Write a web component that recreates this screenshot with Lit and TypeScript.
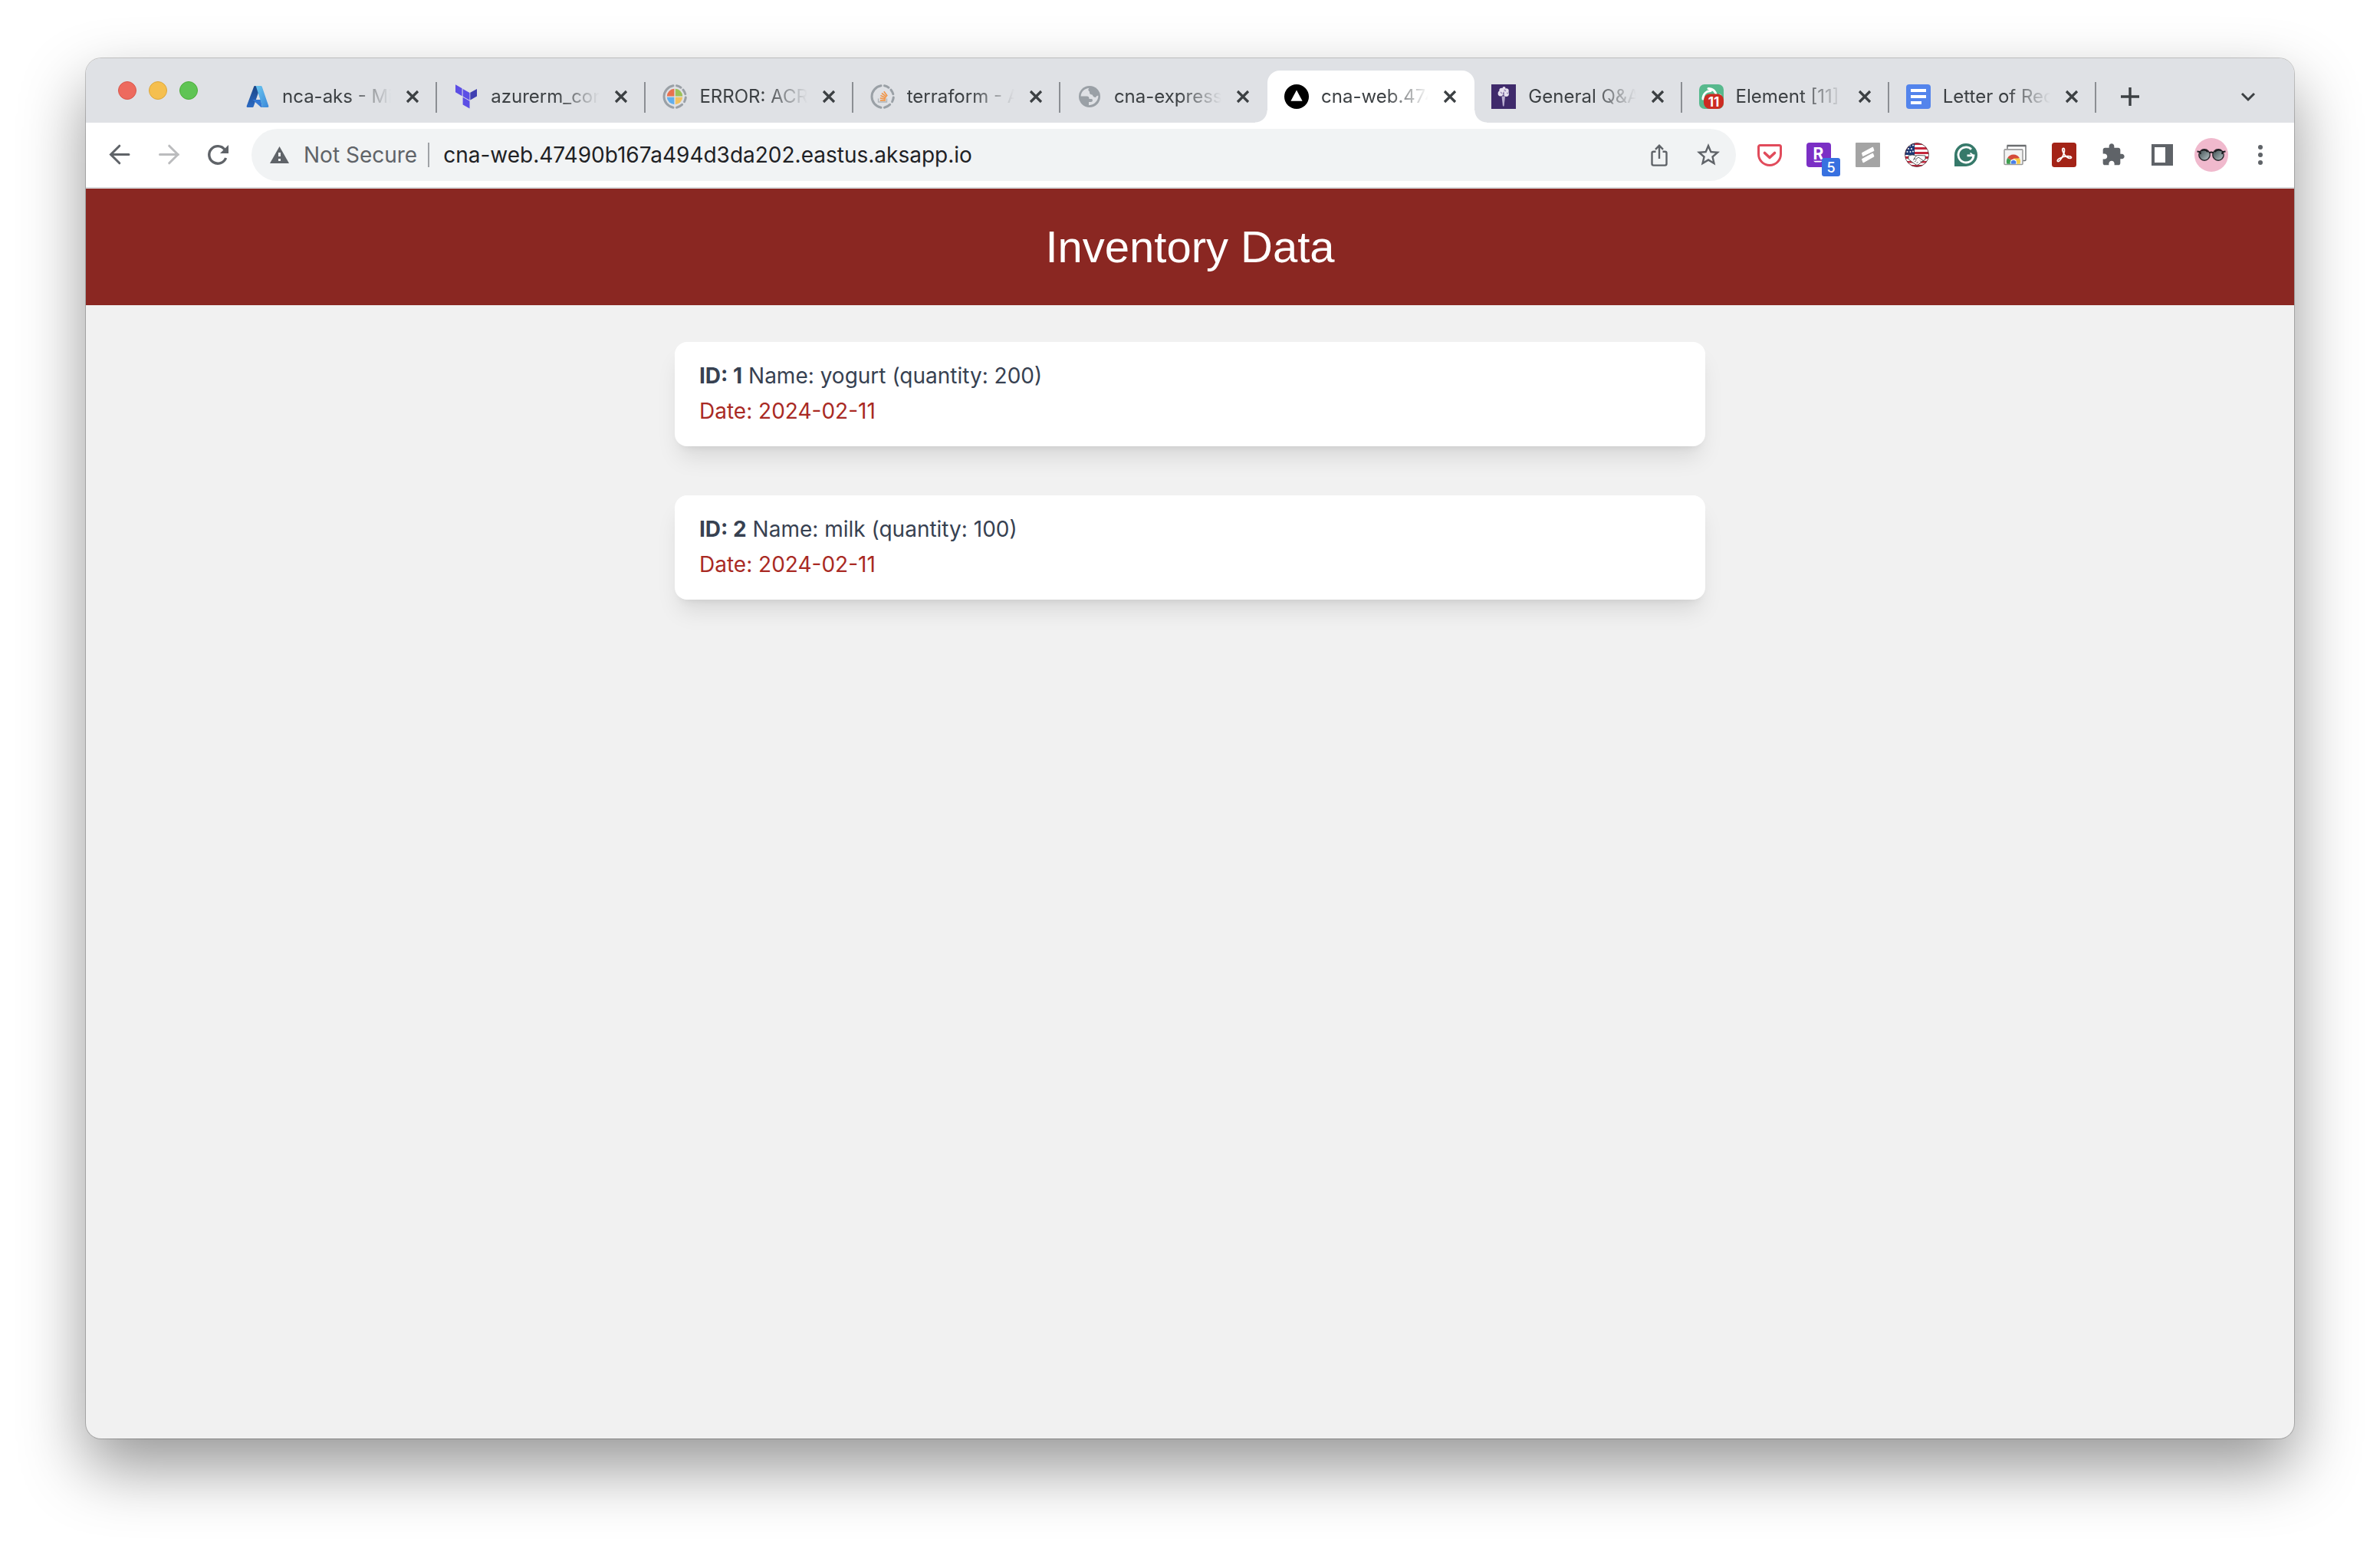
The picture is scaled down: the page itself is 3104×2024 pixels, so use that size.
import { LitElement, html, css, svg, nothing } from "lit";
import { customElement, property } from "lit/decorators.js";
import { classMap } from "lit/directives/class-map.js";

const brokenRing = svg`
  <path d="M14 1.8A14.4 14.4 0 0 0 14 30.2" fill="none" stroke="#9aa0a6" stroke-width="3" stroke-linecap="round"/>
  <path d="M18.5 1.8A14.4 14.4 0 0 1 24 4.2M27 7.2A14.4 14.4 0 0 1 29.8 12.6M30.3 17A14.4 14.4 0 0 1 28.6 22.6M25.6 26.4A14.4 14.4 0 0 1 18.5 30.2"
    fill="none" stroke="#9aa0a6" stroke-width="3" stroke-linecap="round"/>`;

const icons: Record<string, unknown> = {
  azure: html`<svg class="i32" viewBox="0 0 32 32" aria-hidden="true">
    <defs>
      <linearGradient id="az1" x1="0" y1="0" x2="0" y2="1"><stop offset="0" stop-color="#1c4585"/><stop offset="1" stop-color="#2c6bc4"/></linearGradient>
      <linearGradient id="az2" x1="0" y1="0" x2="1" y2="1"><stop offset="0" stop-color="#6bc9f2"/><stop offset="1" stop-color="#3b88d8"/></linearGradient>
    </defs>
    <path d="M12.6 2H20l-9.3 27a1.5 1.5 0 0 1-1.4 1H3a1.3 1.3 0 0 1-1.3-1.8l9.3-25A1.6 1.6 0 0 1 12.6 2z" fill="url(#az1)"/>
    <path d="M9.4 20H20l2 9.4-1.5.6z" fill="#3378d3"/>
    <path d="M12.6 2h7.6A1.7 1.7 0 0 1 21.7 3l8.6 25.2A1.4 1.4 0 0 1 29 30h-8a1.4 1.4 0 0 0 1-1.8L14 3a1.6 1.6 0 0 0-1.4-1z" fill="url(#az2)"/>
  </svg>`,
  terraform: html`<svg class="i32" viewBox="0 0 32 32" aria-hidden="true">
    <path d="M2 .3l8.6 5v10L2 10.3zM11.6 6l8.9 5v9.8l-8.9-5zM11.6 16.8l8.9 5v9.6l-8.9-5z" fill="#5c4ee5"/>
    <path d="M21.3 10.8L30 6v9.4l-8.7 5z" fill="#4040b2"/>
  </svg>`,
  azureDevops: html`<svg class="i32" viewBox="0 0 32 32" aria-hidden="true">${brokenRing}
    <path d="M15.4 15.4V5.8a10 10 0 0 0-9.6 9.6z" fill="#e8714f"/>
    <path d="M16.8 15.4V5.8a10 10 0 0 1 9.4 9.6z" fill="#9cc158"/>
    <path d="M15.4 16.8v9.4a10 10 0 0 1-9.6-9.4z" fill="#62aeec"/>
    <path d="M16.8 16.8v9.4a10 10 0 0 0 9.4-9.4z" fill="#f2c15f"/>
  </svg>`,
  stack: html`<svg class="i32" viewBox="0 0 32 32" aria-hidden="true">${brokenRing}
    <path d="M10.5 18.5v4.5h11v-4.500" fill="none" stroke="#b0b4b8" stroke-width="1.300"/>
    <path d="M12.800 20.800h7.200M12.800 17.800l7.200 1.400M13.400 14.600l7 3.200M15 11.500l6.200 4.800M17.800 9.200l4.400 6" fill="none" stroke="#f0964a" stroke-width="1.700"/>
  </svg>`,
  globe: html`<svg class="i32" viewBox="0 0 32 32" aria-hidden="true">
    <circle cx="16" cy="16" r="14" fill="#9aa0a6"/>
    <path d="M4.600 15.500C5 10 9 5.500 15.500 4.800C13.800 6.500 14 8.500 16 9.500C15.500 12 17 13.500 19.500 13.500C20.500 16 22 17 24 17C25 15.500 26 14.500 27.400 15C27.400 21 23 26.500 15 27.300V23H18C20.300 23 20.800 19.300 18.500 19H15.500C15.500 16.500 14.500 15.500 12.500 15.500Z" fill="#dfe1e5"/>
  </svg>`,
  vercel: html`<svg class="i32" viewBox="0 0 32 32" aria-hidden="true">
    <circle cx="16" cy="16" r="16" fill="#000"/><path d="M16 7.600l7.600 14.200H8.400z" fill="#fff"/>
  </svg>`,
  torch: html`<svg class="i32" viewBox="0 0 32 32" aria-hidden="true">
    <path d="M0 0h32v32H0z" fill="#3f2a6b"/>
    <path d="M13.500 15.500h4.500l-1.500 13h-1.500z" fill="#b9aed0"/>
    <g fill="#e6e0ef"><circle cx="12" cy="12" r="3.400"/><circle cx="19.500" cy="12.500" r="3.400"/><circle cx="13.500" cy="8" r="3.200"/><circle cx="19.500" cy="8.500" r="3.200"/><circle cx="16.500" cy="5" r="2"/></g>
    <path d="M12 10l2 2M17 7l2 2M17 12l-2 2M20 11l2 1" stroke="#8f7eb0" stroke-width="1.200"/>
  </svg>`,
  element: html`<svg class="i32" viewBox="0 0 32 32" aria-hidden="true">
    <rect width="32" height="32" rx="7" fill="#57b98d"/>
    <path d="M12 5.500c6 0 10 4 10.300 9M5 19c0-6 4-10 10-10.500M27 14c1 .5 1 1 1 2" fill="none" stroke="#fff" stroke-width="3" stroke-linecap="round"/>
    <rect x="6" y="12.500" width="26" height="19.500" rx="8" fill="#cc2b22"/>
    <text x="19" y="28.500" text-anchor="middle" font-family="Inter, sans-serif" font-size="17" font-weight="700" fill="#fff">11</text>
  </svg>`,
  docs: html`<svg class="i32" viewBox="0 0 32 32" aria-hidden="true">
    <rect width="32" height="32" rx="4" fill="#5384ec"/>
    <path d="M6 6h20v4H6zM6 14h20v4H6zM6 22h14v4H6z" fill="#fff"/>
  </svg>`,
  close: html`<svg class="i32" viewBox="0 0 32 32" aria-hidden="true">
    <path d="M9 9l14 14M23 9L9 23" stroke="#3c4043" stroke-width="3.200"/>
  </svg>`,
  plus: html`<svg class="i32" viewBox="0 0 32 32" aria-hidden="true">
    <path d="M16 4v24M4 16h24" stroke="#3c4043" stroke-width="3.400"/>
  </svg>`,
  chevron: html`<svg class="i32" viewBox="0 0 32 32" aria-hidden="true">
    <path d="M8 12l8 8 8-8" fill="none" stroke="#3c4043" stroke-width="3"/>
  </svg>`,
  back: html`<svg class="i32" viewBox="0 0 32 32" aria-hidden="true">
    <path d="M28 15.500H4.500M15.800 4.200L4.500 15.500l11.300 11.300" fill="none" stroke="#5f6368" stroke-width="3" stroke-linecap="round"/>
  </svg>`,
  forward: html`<svg class="i32" viewBox="0 0 32 32" aria-hidden="true">
    <path d="M4.500 15.500h24M16.700 4.200L28 15.500 16.700 26.800" fill="none" stroke="#bbbcbe" stroke-width="3" stroke-linecap="round"/>
  </svg>`,
  reload: html`<svg class="i32" viewBox="0 0 32 32" aria-hidden="true">
    <path d="M25 9A11.300 11.300 0 1 0 26.600 20" fill="none" stroke="#5f6368" stroke-width="3.400"/>
    <path d="M30 3v11H19z" fill="#5f6368"/>
  </svg>`,
  warning: html`<svg class="i26" viewBox="0 0 26 26" aria-hidden="true">
    <path d="M12.500 2L25 24H0z" fill="#5f6368"/><path d="M11 10h3v5h-3zM11 18h3v3h-3z" fill="#f1f3f4"/>
  </svg>`,
  share: html`<svg class="i32" viewBox="0 0 32 32" aria-hidden="true">
    <path d="M11.500 11.700H8.500a2 2 0 0 0-2 2V27.600a2 2 0 0 0 2 2h15a2 2 0 0 0 2-2V13.700a2 2 0 0 0-2-2h-3M16 21V5M11 8.800L16 3.800l5 5" fill="none" stroke="#5f6368" stroke-width="2.400"/>
  </svg>`,
  star: html`<svg class="i36" viewBox="0 0 24 24" aria-hidden="true">
    <path d="M22 9.240l-7.190-.62L12 2 9.190 8.630 2 9.240l5.460 4.730L5.820 21 12 17.270 18.180 21l-1.630-7.030L22 9.240zM12 15.400l-3.760 2.270 1-4.280-3.320-2.880 4.380-.38L12 6.100l1.710 4.040 4.380.38-3.320 2.880 1 4.280L12 15.400z" fill="#5f6368"/>
  </svg>`,
  pocket: html`<svg class="i32" viewBox="0 0 32 32" aria-hidden="true">
    <path d="M3.500 3.500h25a2 2 0 0 1 2 2V15a14.500 14.500 0 0 1-29 0V5.500a2 2 0 0 1 2-2z" fill="none" stroke="#e14b5b" stroke-width="3"/>
    <path d="M9.500 13.500l6.500 6 6.500-6" fill="none" stroke="#e14b5b" stroke-width="3.600" stroke-linecap="round" stroke-linejoin="round"/>
  </svg>`,
  rakuten: html`<svg class="i32" viewBox="0 0 32 32" aria-hidden="true">
    <rect width="32" height="32" rx="4" fill="#7b2fc5"/>
    <text x="15.500" y="21.500" text-anchor="middle" font-family="Inter, sans-serif" font-size="21" font-weight="700" fill="#fff">R</text>
    <path d="M9 23.800h12l-2.500 1.800H11z" fill="#fff"/>
  </svg>`,
  scribe: html`<svg class="i32" viewBox="0 0 32 32" aria-hidden="true">
    <rect width="32" height="32" rx="1" fill="#a4a4a4"/>
    <path d="M8.500 13.500L22.500 6 24 10.500 9.500 17.500zM8.500 21.500l14-7.500 1.500 4L10 26z" fill="#fff" stroke="#fff" stroke-linejoin="round"/>
  </svg>`,
  flag: html`<svg class="i32" viewBox="0 0 32 32" aria-hidden="true">
    <defs><clipPath id="fl"><circle cx="16" cy="16" r="15.500"/></clipPath></defs>
    <g clip-path="url(#fl)">
      <path d="M0 0h32v32H0z" fill="#fff"/>
      <path d="M0 0h32v3H0zM0 6h32v3H0zM0 12h32v3H0zM0 18h32v3H0zM0 24h32v2.500H0zM0 29h32v3H0z" fill="#c4273c"/>
      <path d="M0 0h13v16H0z" fill="#1f3a75"/>
      <g fill="#fff"><circle cx="7" cy="4" r="1"/><circle cx="11" cy="3.500" r="1"/><circle cx="5" cy="8" r="1"/><circle cx="9" cy="8" r="1"/><circle cx="3.500" cy="12" r="1"/><circle cx="7.500" cy="12" r="1"/><circle cx="11" cy="11.500" r="1"/></g>
      <path d="M5 17l5-1 5 1 3-.5 9 .5v5l-5 3-3 3-3 1.500-6-4-5-4z" fill="#fff" stroke="#333" stroke-width=".8"/>
      <path d="M15.500 17l-3.500 4 3 .5 3-2.500 7 5M11 23l2-2M13 25l2.500-2M15.500 27l2-2M20 23.500l2 2" fill="none" stroke="#333" stroke-width=".8"/>
    </g>
    <circle cx="16" cy="16" r="15.500" fill="none" stroke="#4a2a32" stroke-width=".8"/>
  </svg>`,
  grammarly: html`<svg class="i32" viewBox="0 0 32 32" aria-hidden="true">
    <path d="M1 31V16A15 15 0 1 1 16 31z" fill="#36796a"/>
    <path d="M23 8.800A10 10 0 1 0 26 16.800H17.500" fill="none" stroke="#fff" stroke-width="2.800"/>
    <path d="M21.500 13.500l4.500 3.500-2 5" fill="none" stroke="#fff" stroke-width="1.600"/>
  </svg>`,
  remote: html`<svg class="i32" viewBox="0 0 32 32" aria-hidden="true">
    <rect x="6" y="4" width="24" height="19.500" rx="1" fill="#fff" stroke="#6b6e70" stroke-width="1.400"/><path d="M5.500 4h25" stroke="#6b6e70" stroke-width="2.400"/>
    <rect x="2" y="9" width="24" height="19.500" rx="1" fill="#f3f3f3" stroke="#9a9a9a" stroke-width="1.500"/><path d="M2 9h24" stroke="#a5a5a5" stroke-width="2.200"/>
    <path d="M14 24.500L6.200 20A9 9 0 0 1 21.800 20z" fill="#d44a3a"/>
    <path d="M6.200 20A9 9 0 0 0 5.400 27.700H14V24.500z" fill="#3f9e50"/>
    <path d="M14 20.500h8.100a9 9 0 0 1 .5 7.200H14z" fill="#f5cb45"/>
    <path d="M10.200 27.700a4.300 4.300 0 1 1 7.600 0z" fill="#fff"/><path d="M11 27.700a3.400 3.400 0 1 1 6 0z" fill="#4a80e8"/>
  </svg>`,
  acrobat: html`<svg class="i32" viewBox="0 0 32 32" aria-hidden="true">
    <rect width="32" height="32" rx="3.500" fill="#a32317"/>
    <path d="M14.500 7.500c2.500-1 2.200 3.500 1.200 6.500-1.200 4-4.500 9.500-7 10.500-2 .5-2-2 1-3.800 3.500-2 9-3.300 12.500-3 3.500.2 4.200 2.300 2.200 2.700-3 .5-7.500-3.500-9.200-6.800-1.200-2.500-1.700-5.500-.7-6.100z" fill="none" stroke="#fff" stroke-width="1.800"/>
  </svg>`,
  puzzle: html`<svg class="i32" viewBox="0 0 24 24" aria-hidden="true">
    <path d="M20.500 11H19V7c0-1.100-.9-2-2-2h-4V3.500C13 2.120 11.880 1 10.500 1S8 2.120 8 3.500V5H4c-1.100 0-1.990.9-1.990 2v3.800H3.500c1.490 0 2.700 1.210 2.700 2.700s-1.210 2.700-2.700 2.700H2V20c0 1.100.9 2 2 2h3.800v-1.500c0-1.490 1.210-2.700 2.700-2.700 1.490 0 2.700 1.210 2.700 2.700V22H17c1.100 0 2-.9 2-2v-4h1.500c1.380 0 2.500-1.120 2.500-2.500S21.880 11 20.500 11z" fill="#5f6368"/>
  </svg>`,
  panel: html`<svg class="i32" viewBox="0 0 32 32" aria-hidden="true">
    <path d="M2 2h28v28H2zM6 6v20h14V6z" fill="#5f6368" fill-rule="evenodd"/>
  </svg>`,
  avatar: html`<svg class="i44" viewBox="0 0 44 44" aria-hidden="true">
    <defs><linearGradient id="gl" x1="0" y1="0" x2="1" y2="1"><stop offset="0" stop-color="#39494c"/><stop offset="1" stop-color="#b9c6c8"/></linearGradient></defs>
    <circle cx="22" cy="22" r="22" fill="#f0b9cd"/>
    <g fill="url(#gl)" stroke="#2b2a2e" stroke-width="1.400"><circle cx="13" cy="22" r="7.200"/><circle cx="31" cy="22" r="7.200"/></g>
    <path d="M3.500 17.500l4 .5.500 3M40.500 17.500l-4 .5-.5 3M9 16.500c3-1.500 6-1 8.500 1.500M26.500 18c2.500-2.500 5.500-3 8.500-1.500M19.500 19.500c1.500-1.200 3.500-1.200 5 0" fill="none" stroke="#1c1b1f" stroke-width="1.800"/>
  </svg>`,
  dots: html`<svg class="i32" viewBox="0 0 32 32" aria-hidden="true">
    <g fill="#5f6368"><circle cx="16" cy="6" r="3"/><circle cx="16" cy="16" r="3"/><circle cx="16" cy="26" r="3"/></g>
  </svg>`,
};

const shared = css`
  * { box-sizing: border-box; }
  button, input {
    margin: 0;
    padding: 0;
    border: 0;
    background: none;
    font: inherit;
    color: inherit;
  }
  svg { display: block; flex: none; overflow: visible; }
  .i26 { width: 26px; height: 26px; }
  .i32 { width: 32px; height: 32px; }
  .i36 { width: 36px; height: 36px; }
  .i44 { width: 44px; height: 44px; }
`;

interface Tab { icon: string; title: string; active?: boolean }

const tabs: Tab[] = [
  { icon: "azure", title: "nca-aks - Mic" },
  { icon: "terraform", title: "azurerm_con" },
  { icon: "azureDevops", title: "ERROR: ACR" },
  { icon: "stack", title: "terraform - A" },
  { icon: "globe", title: "cna-express" },
  { icon: "vercel", title: "cna-web.474", active: true },
  { icon: "torch", title: "General Q&A" },
  { icon: "element", title: "Element [11]" },
  { icon: "docs", title: "Letter of Rec" },
];

@customElement("tab-strip")
export class TabStrip extends LitElement {
  static styles = [shared, css`
    :host {
      display: flex;
      align-items: flex-end;
      height: 84px;
      padding: 0 32px 0 42px;
      background: #dfe1e5;
      font-size: 24px;
      color: #3c4043;
    }
    .lights { display: flex; gap: 16px; align-self: center; margin-right: 40px; }
    .light { width: 24px; height: 24px; border-radius: 50%; }
    .light-close { background: #ed6a5e; border: 1px solid #d8574b; }
    .light-min { background: #f5bf4f; border: 1px solid #dca73b; }
    .light-max { background: #5fc454; border: 1px solid #4cad3a; }
    .tabs { display: flex; flex: 0 1 2436px; min-width: 0; }
    .tab {
      position: relative;
      display: flex;
      align-items: center;
      flex: 1 1 270px;
      height: 68px;
      padding: 0 16px 0 22px;
      min-width: 0;
    }
    .tab:nth-child(-n + 2) { flex-basis: 272px; }
    .tab-ruled::after {
      content: "";
      position: absolute;
      right: 0;
      top: 15px;
      width: 2px;
      height: 40px;
      background: #8b8e93;
    }
    .tab-active { background: #fff; border-radius: 16px 16px 0 0; }
    .tab-active::before, .tab-active::after {
      content: "";
      position: absolute;
      bottom: 0;
      width: 16px;
      height: 16px;
    }
    .tab-active::before { right: 100%; background: radial-gradient(circle at 0 0, transparent 15px, #fff 16px); }
    .tab-active::after { left: 100%; background: radial-gradient(circle at 100% 0, transparent 15px, #fff 16px); }
    .tab-label { display: flex; align-items: center; flex: 1; gap: 16px; min-width: 0; height: 100%; text-align: left; }
    .tab-title {
      flex: 1;
      min-width: 0;
      overflow: hidden;
      white-space: nowrap;
      line-height: 32px;
      mask-image: linear-gradient(to right, #000 calc(100% - 56px), transparent);
    }
    .tab-close { margin-left: 12px; }
    .round { display: flex; align-items: center; justify-content: center; width: 56px; height: 68px; }
    .new-tab { margin-left: 16px; }
    .search { margin-left: auto; }
  `];

  render() {
    const activeIndex = tabs.findIndex((t) => t.active);
    return html`
      <div class="lights">
        <button class="light light-close" aria-label="Close window"></button>
        <button class="light light-min" aria-label="Minimize window"></button>
        <button class="light light-max" aria-label="Zoom window"></button>
      </div>
      <div class="tabs">
        ${tabs.map((t, i) => html`
          <div class=${classMap({
            tab: true,
            "tab-active": !!t.active,
            "tab-ruled": i !== activeIndex && i !== activeIndex - 1,
          })}>
            <button class="tab-label">${icons[t.icon]}<span class="tab-title">${t.title}</span></button>
            <button class="tab-close" aria-label="Close tab">${icons.close}</button>
          </div>`)}
      </div>
      <button class="round new-tab" aria-label="New tab">${icons.plus}</button>
      <button class="round search" aria-label="Search tabs">${icons.chevron}</button>
    `;
  }
}

const extensions: { icon: string; label: string; badge?: string }[] = [
  { icon: "pocket", label: "Pocket" },
  { icon: "rakuten", label: "Rakuten", badge: "5" },
  { icon: "scribe", label: "Scribe" },
  { icon: "flag", label: "Civic helper" },
  { icon: "grammarly", label: "Grammarly" },
  { icon: "remote", label: "Remote Desktop" },
  { icon: "acrobat", label: "Acrobat" },
  { icon: "puzzle", label: "Extensions" },
  { icon: "panel", label: "Side panel" },
  { icon: "avatar", label: "Profile" },
  { icon: "dots", label: "Menu" },
];

@customElement("address-bar")
export class AddressBar extends LitElement {
  static styles = [shared, css`
    :host {
      display: flex;
      align-items: center;
      gap: 12px;
      padding: 8px 12px;
      background: #fff;
      border-bottom: 2px solid #dadbdd;
      font-size: 28px;
    }
    .group { display: flex; }
    .tool {
      position: relative;
      display: flex;
      align-items: center;
      justify-content: center;
      width: 64px;
      height: 68px;
    }
    .omnibox {
      display: flex;
      align-items: center;
      flex: 1;
      min-width: 0;
      height: 68px;
      padding: 0 4px 0 24px;
      border-radius: 34px;
      background: #f1f3f4;
    }
    .security { display: flex; align-items: center; gap: 18px; color: #5f6368; white-space: nowrap; }
    .rule { width: 2px; height: 32px; margin: 0 18px 0 14px; background: #9fa2a6; }
    .url { flex: 1; min-width: 0; color: #202124; outline: none; }
    .badge {
      position: absolute;
      left: 36px;
      top: 38px;
      width: 24px;
      height: 24px;
      border-radius: 3px;
      background: #3871e0;
      color: #fff;
      font-size: 18px;
      line-height: 25px;
      font-weight: 500;
      text-align: center;
    }
  `];

  render() {
    return html`
      <div class="group">
        <button class="tool" aria-label="Back">${icons.back}</button>
        <button class="tool" aria-label="Forward">${icons.forward}</button>
        <button class="tool" aria-label="Reload">${icons.reload}</button>
      </div>
      <div class="omnibox">
        <button class="security">${icons.warning}<span>Not Secure</span></button>
        <span class="rule"></span>
        <input class="url" aria-label="Address" .value=${"cna-web.47490b167a494d3da202.eastus.aksapp.io"}>
        <button class="tool" aria-label="Share">${icons.share}</button>
        <button class="tool" aria-label="Bookmark">${icons.star}</button>
      </div>
      <div class="group">
        ${extensions.map((e) => html`
          <button class="tool" aria-label=${e.label}>${icons[e.icon]}${e.badge
            ? html`<span class="badge">${e.badge}</span>` : nothing}</button>`)}
      </div>
    `;
  }
}

interface Item { id: number; name: string; quantity: number; date: string }

@customElement("inventory-card")
export class InventoryCard extends LitElement {
  @property({ attribute: false }) item!: Item;

  static styles = [shared, css`
    :host {
      display: block;
      padding: 21px 32px 23px;
      border-radius: 16px;
      background: #fff;
      box-shadow: 0 20px 30px -6px rgba(0, 0, 0, 0.1), 0 8px 12px -8px rgba(0, 0, 0, 0.1);
      font-size: 28px;
      line-height: 46px;
      color: #374151;
    }
    p { margin: 0; }
    .date { color: #a92a24; }
  `];

  render() {
    const { id, name, quantity, date } = this.item;
    return html`
      <p><strong>ID: ${id}</strong> Name: ${name} (quantity: ${quantity})</p>
      <p class="date">Date: ${date}</p>
    `;
  }
}

@customElement("app-root")
export class AppRoot extends LitElement {
  static styles = [shared, css`
    :host {
      display: flex;
      box-sizing: border-box;
      min-height: 100vh;
      padding: 76px 112px 148px;
      background: #fff;
      font-family: Inter, Roboto, "Liberation Sans", sans-serif;
    }
    .window {
      display: flex;
      flex-direction: column;
      flex: 1;
      min-width: 0;
      border-radius: 20px;
      overflow: hidden;
      background: #f1f1f1;
      box-shadow: 0 0 0 1px rgba(0, 0, 0, 0.2), 0 38px 84px rgba(0, 0, 0, 0.41);
    }
    .banner { padding: 40px 32px; background: #8a2722; color: #fff; text-align: center; }
    .heading {
      margin: 0;
      font-family: "Liberation Sans", Arial, sans-serif;
      font-size: 58px;
      line-height: 72px;
      font-weight: 400;
    }
    .list {
      display: flex;
      flex-direction: column;
      gap: 64px;
      width: 100%;
      max-width: 1344px;
      margin: 48px auto;
    }
  `];

  private items: Item[] = [
    { id: 1, name: "yogurt", quantity: 200, date: "2024-02-11" },
    { id: 2, name: "milk", quantity: 100, date: "2024-02-11" },
  ];

  render() {
    return html`
      <div class="window">
        <tab-strip></tab-strip>
        <address-bar></address-bar>
        <header class="banner"><h1 class="heading">Inventory Data</h1></header>
        <main class="list">
          ${this.items.map((item) => html`<inventory-card .item=${item}></inventory-card>`)}
        </main>
      </div>
    `;
  }
}
